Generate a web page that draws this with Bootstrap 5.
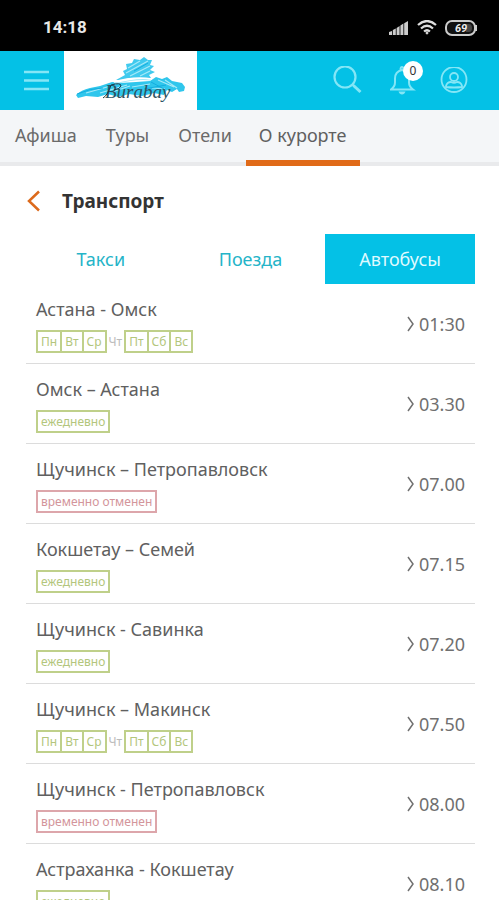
<!DOCTYPE html>
<html lang="ru">
<head>
<meta charset="utf-8">
<meta name="viewport" content="width=device-width, initial-scale=1">
<title>Транспорт</title>
<link href="https://cdn.jsdelivr.net/npm/bootstrap@5.3.0/dist/css/bootstrap.min.css" rel="stylesheet">
<style>
body{font-family:"Noto Sans","Open Sans",sans-serif;color:#555;background:#fff}
.status-bar{height:51px;background:#000;color:#e8e8e8;padding:4px 22px 0 43px;font-family:Roboto,sans-serif;font-size:17px;font-weight:700}
.app-bar{height:59px;background:#04c1e6;padding:0 31px 0 24px}
.icon-btn{color:#84e6f6;line-height:0}
.logo-box{width:133px;height:59px;background:#fff;margin-left:15px}
.bell-count{top:-5px;left:13px;width:20px;height:20px;background:#fff;color:#333;font-size:12px;line-height:20px}
.main-tabs{height:56px;background:#f4f6f8;border-bottom:4px solid #e9eaec}
.main-tabs a{height:56px;padding:9px 14px 0 15px;font-size:18px;line-height:32px;color:#6a6a6a;text-decoration:none;white-space:nowrap}
.main-tabs a.active{border-bottom:6px solid #e06a18;color:#606060;padding-left:13px}
.page-title{font-size:19px;line-height:28px;color:#333}
.title-row{height:68px;padding:2px 26px 0}
.back-btn{color:#dc6a1c;line-height:0}
.sections{padding:0 24px 0 26px}
.sections button{height:50px;font-size:18px;color:#25b4c8;background:#fff}
.sections button.active{background:#04c1e6;color:#dffaff}
.trips{padding:0 24px 0 26px}
.trip{height:80px;border-bottom:1px solid #dcdcdc;padding:0 10px 0 10px}
.trip-name{font-size:18px;line-height:26px;color:#606060;padding-top:12px}
.trip-time{font-size:18px;line-height:26px;color:#707070;gap:4px}
.tag-box{height:23px;border:2px solid #bfd08a;color:#b3c67c;font-size:12px;line-height:20px;padding:0 3px}
.tag-red{border-color:#dda6ab;color:#d3959b}
.days{margin-top:8px}
.days .tag-box + .tag-box{border-left-width:0}
.day-off{font-size:12px;line-height:24px;color:#bbb;padding:0 2px}
</style>
<script src="https://cdn.jsdelivr.net/npm/bootstrap@5.3.0/dist/js/bootstrap.bundle.min.js" defer></script>
</head>
<body>
<div class="vh-100 overflow-hidden d-flex flex-column">
<div class="status-bar d-flex align-items-center justify-content-between flex-shrink-0">
  <span>14:18</span>
  <span class="d-flex align-items-center gap-2">
    <svg width="20" height="14" viewBox="0 0 20 14" fill="#ccc"><path d="M0 14v-3l3-1v4zM3.800 14V9l3-1.500V14zM7.600 14V7l3-2v9zM11.400 14V4.500l3-2V14zM15.200 14V2.200L19 0v14z"/></svg>
    <svg width="20" height="15" viewBox="0 0 20 15" fill="none" stroke="#ddd" stroke-width="2.200"><path d="M1 5Q10-3 19 5M4 8.500Q10 3 16 8.500M7 11.500Q10 9 13 11.500"/><circle cx="10" cy="13" r="1" fill="#ddd" stroke-width="1"/></svg>
    <svg width="32" height="16" viewBox="0 0 32 16"><rect x="1" y="1" width="29" height="14" rx="6" fill="#111" stroke="#ccc" stroke-width="2"/><path d="M21 4h3q3 0 3 4t-3 4h-3z" fill="#444"/><path d="M31 5v6" stroke="#ccc" stroke-width="2"/><text x="10" y="12" font-family="Roboto,sans-serif" font-size="11" font-weight="700" font-style="italic" fill="#eee">69</text></svg>
  </span>
</div>
<header class="app-bar d-flex align-items-center justify-content-between flex-shrink-0">
  <div class="d-flex align-items-center">
    <button type="button" class="btn p-0 border-0 icon-btn" aria-label="Меню"><svg width="25" height="22" viewBox="0 0 25 22" stroke="currentColor" stroke-width="2.500"><path d="M0 2h25M0 10.500h25M0 19h25"/></svg></button>
    <a href="#" class="logo-box d-block" aria-label="Burabay"><svg width="133" height="59" viewBox="0 0 133 59">
      <path d="M12 44Q17 39 26 37L36 35 48 31 56 32 72 31 86 30 92 26 98 28 103 26 108 30 118 32 121 36 120 40 115 41 113 38 108 41 103 39 100 44 90 42 78 45 65 43 54 46 44 43 34 46 22 45 14 47Z" fill="#2fc6ec"/>
      <path d="M52 29 61 24 59 20 63 18 62 13 68 12 70 8 76 9 80 6 84 9 88 9 86 14 90 15 86 19 91 21 85 24 87 27 78 27 66 27 58 29Z" fill="#40caee"/>
      <path d="M64 17l12-7M62 22l22-12M66 25l20-10M76 25l10-5M22 42l21-6M36 42l27-8M48 41l18-6M68 36l18-3M94 29l16 7M101 29l12 8M88 37l13 1M51 33q21-6 36-4" stroke="#a6e9f8" stroke-width="1.200" fill="none"/>
      <path d="M50 31q20-6 38-3" stroke="#fff" stroke-width="1.500" fill="none"/>
      <path d="M13 43q14-6 26-6M87 31l13 7M80 38l22-4M70 20l14-8" stroke="#12addf" stroke-width="1" fill="none"/>
      <text x="41" y="47" font-family="Liberation Serif,serif" font-size="19" font-style="italic" fill="#2c5362">Burabay</text>
      <path d="M39 47q5-3 8-13 10-3 10 1-1 3-7 4" stroke="#173847" stroke-width="1" fill="none"/></svg></a>
  </div>
  <div class="d-flex align-items-center">
    <button type="button" class="btn p-0 border-0 icon-btn me-4" aria-label="Поиск"><svg width="29" height="29" viewBox="0 0 29 29" fill="none" stroke="currentColor" stroke-width="2.200"><circle cx="12" cy="11" r="10.500"/><path d="m19 18 2 2"/><path d="m20.500 19.500 7 6.500" stroke-width="3"/></svg></button>
    <button type="button" class="btn p-0 border-0 icon-btn position-relative me-4 ms-1" aria-label="Уведомления"><svg width="26" height="29" viewBox="0 0 26 29" fill="none" stroke="currentColor" stroke-width="2"><path d="M1 23.500h22q-4-3-4-7v-4q0-7-7-8.500-7 1.500-7 8.500v4q0 4-4 7zM10.500 4q0-3 1.500-3t1.500 3"/><path d="M8.500 25.500h7q-1 3-3.500 3t-3.500-3z" fill="currentColor" stroke="none"/></svg><span class="bell-count position-absolute rounded-circle text-center">0</span></button>
    <button type="button" class="btn p-0 border-0 icon-btn" aria-label="Профиль"><svg width="28" height="28" viewBox="0 0 28 28" fill="none" stroke="currentColor" stroke-width="1.800"><circle cx="14" cy="12.500" r="12.500"/><circle cx="14" cy="10" r="4"/><path d="M6 20v-1q1-4 5-4 3 1.500 6 0 4 0 5 4v1q-8 1-16 0z"/></svg></button>
  </div>
</header>
<nav class="main-tabs d-flex flex-shrink-0">
  <a href="#">Афиша</a><a href="#">Туры</a><a href="#">Отели</a><a href="#" class="active" aria-current="page">О курорте</a>
</nav>
<main class="flex-grow-1 overflow-hidden">
  <div class="title-row d-flex align-items-center">
    <button type="button" class="btn p-0 border-0 back-btn" aria-label="Назад"><svg width="16" height="22" viewBox="0 0 16 22" fill="none" stroke="currentColor" stroke-width="2.500"><path d="M13 1.500 3 11l10 9.500"/></svg></button>
    <h1 class="page-title fw-bold mb-0 ms-3 ps-1">Транспорт</h1>
  </div>
  <div class="sections"><div class="row g-0">
    <div class="col-4"><button type="button" class="btn rounded-0 border-0 w-100 p-0">Такси</button></div>
    <div class="col-4"><button type="button" class="btn rounded-0 border-0 w-100 p-0">Поезда</button></div>
    <div class="col-4"><button type="button" class="btn rounded-0 border-0 w-100 p-0 active">Автобусы</button></div>
  </div></div>
  <ul class="trips list-unstyled mb-0">
    <li class="trip d-flex justify-content-between"><div><div class="trip-name">Астана - Омск</div><div class="days d-flex"><span class="tag-box">Пн</span><span class="tag-box">Вт</span><span class="tag-box">Ср</span><span class="day-off">Чт</span><span class="tag-box">Пт</span><span class="tag-box">Сб</span><span class="tag-box">Вс</span></div></div><div class="trip-time d-flex align-items-center"><svg width="8" height="16" viewBox="0 0 8 16" fill="none" stroke="currentColor" stroke-width="1.500"><path d="m1 1 5 7-5 7"/></svg>01:30</div></li>
    <li class="trip d-flex justify-content-between"><div><div class="trip-name">Омск – Астана</div><div class="days d-flex"><span class="tag-box">ежедневно</span></div></div><div class="trip-time d-flex align-items-center"><svg width="8" height="16" viewBox="0 0 8 16" fill="none" stroke="currentColor" stroke-width="1.500"><path d="m1 1 5 7-5 7"/></svg>03.30</div></li>
    <li class="trip d-flex justify-content-between"><div><div class="trip-name">Щучинск – Петропавловск</div><div class="days d-flex"><span class="tag-box tag-red">временно отменен</span></div></div><div class="trip-time d-flex align-items-center"><svg width="8" height="16" viewBox="0 0 8 16" fill="none" stroke="currentColor" stroke-width="1.500"><path d="m1 1 5 7-5 7"/></svg>07.00</div></li>
    <li class="trip d-flex justify-content-between"><div><div class="trip-name">Кокшетау – Семей</div><div class="days d-flex"><span class="tag-box">ежедневно</span></div></div><div class="trip-time d-flex align-items-center"><svg width="8" height="16" viewBox="0 0 8 16" fill="none" stroke="currentColor" stroke-width="1.500"><path d="m1 1 5 7-5 7"/></svg>07.15</div></li>
    <li class="trip d-flex justify-content-between"><div><div class="trip-name">Щучинск - Савинка</div><div class="days d-flex"><span class="tag-box">ежедневно</span></div></div><div class="trip-time d-flex align-items-center"><svg width="8" height="16" viewBox="0 0 8 16" fill="none" stroke="currentColor" stroke-width="1.500"><path d="m1 1 5 7-5 7"/></svg>07.20</div></li>
    <li class="trip d-flex justify-content-between"><div><div class="trip-name">Щучинск – Макинск</div><div class="days d-flex"><span class="tag-box">Пн</span><span class="tag-box">Вт</span><span class="tag-box">Ср</span><span class="day-off">Чт</span><span class="tag-box">Пт</span><span class="tag-box">Сб</span><span class="tag-box">Вс</span></div></div><div class="trip-time d-flex align-items-center"><svg width="8" height="16" viewBox="0 0 8 16" fill="none" stroke="currentColor" stroke-width="1.500"><path d="m1 1 5 7-5 7"/></svg>07.50</div></li>
    <li class="trip d-flex justify-content-between"><div><div class="trip-name">Щучинск - Петропавловск</div><div class="days d-flex"><span class="tag-box tag-red">временно отменен</span></div></div><div class="trip-time d-flex align-items-center"><svg width="8" height="16" viewBox="0 0 8 16" fill="none" stroke="currentColor" stroke-width="1.500"><path d="m1 1 5 7-5 7"/></svg>08.00</div></li>
    <li class="trip d-flex justify-content-between"><div><div class="trip-name">Астраханка - Кокшетау</div><div class="days d-flex"><span class="tag-box">ежедневно</span></div></div><div class="trip-time d-flex align-items-center"><svg width="8" height="16" viewBox="0 0 8 16" fill="none" stroke="currentColor" stroke-width="1.500"><path d="m1 1 5 7-5 7"/></svg>08.10</div></li>
  </ul>
</main>
</div>
</body>
</html>
